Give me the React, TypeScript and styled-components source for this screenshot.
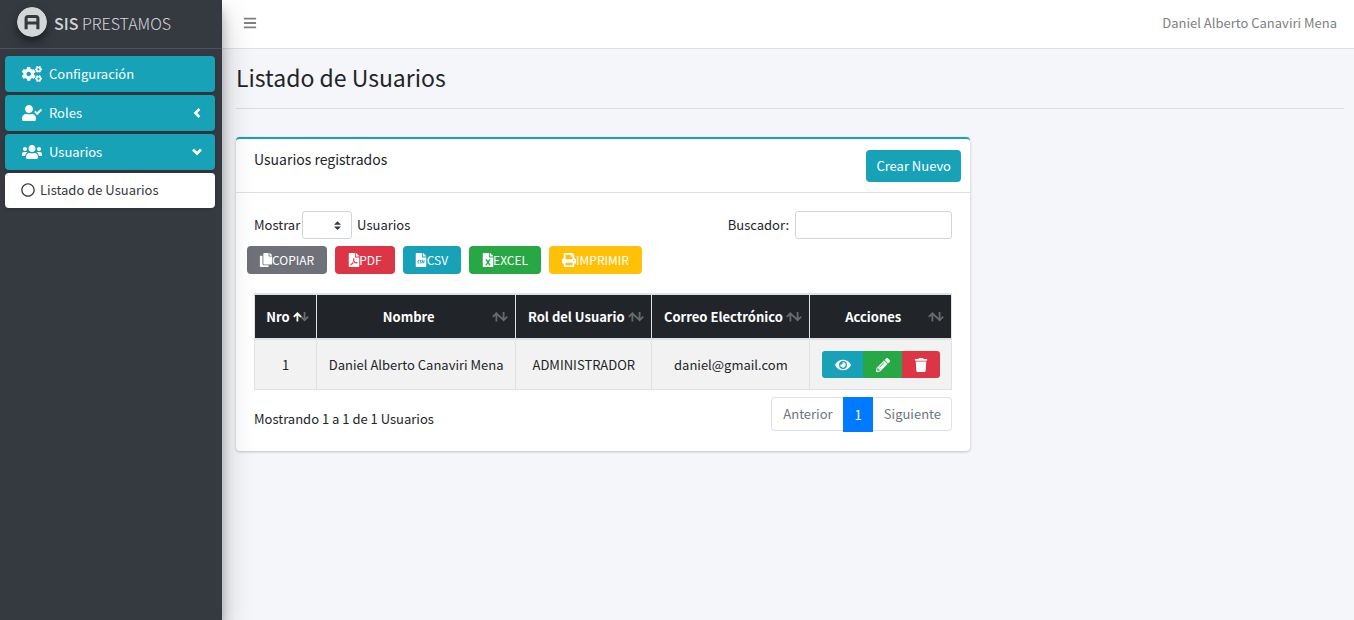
import React from "react";
import styled, { createGlobalStyle, css } from "styled-components";
import {
  FaAngleDown,
  FaAngleLeft,
  FaBars,
  FaCogs,
  FaCopy,
  FaEye,
  FaFileCsv,
  FaFileExcel,
  FaFilePdf,
  FaPencilAlt,
  FaPrint,
  FaRegCircle,
  FaTrash,
  FaUserCheck,
  FaUsers,
} from "react-icons/fa";

const teal = "#17a2b8";
const green = "#28a745";
const red = "#dc3545";
const yellow = "#ffc107";
const gray = "#6c757d";
const line = "#dee2e6";

const GlobalStyle = createGlobalStyle`
  *, *::before, *::after { box-sizing: border-box; }
  body {
    margin: 0;
    background: #f4f6f9;
    color: #212529;
    font-family: "Source Sans Pro", "Noto Sans CJK SC", "Noto Sans", sans-serif;
    font-size: 13px;
    line-height: 20px;
  }
  button, input, select { font: inherit; }
  svg { flex: none; }
`;

const Shell = styled.div`
  display: flex;
  min-height: 100vh;
`;

const Sidebar = styled.aside`
  position: relative;
  z-index: 2;
  flex: 0 0 222px;
  background: #343a40;
  box-shadow: 0 14px 28px rgba(0, 0, 0, 0.25), 0 10px 10px rgba(0, 0, 0, 0.22);
`;

const Brand = styled.a`
  display: flex;
  align-items: center;
  gap: 7px;
  height: 49px;
  padding: 0 17px 4px;
  border-bottom: 1px solid #4b545c;
  color: rgba(255, 255, 255, 0.8);
  font-size: 16px;
  font-weight: 300;
  line-height: 22px;
  text-decoration: none;
  white-space: nowrap;

  span {
    padding-top: 2px;
  }

  strong {
    font-weight: 500;
  }
`;

const LogoMark = styled.svg`
  width: 30px;
  height: 30px;
  border-radius: 50%;
  box-shadow: 0 6px 12px rgba(0, 0, 0, 0.25), 0 4px 5px rgba(0, 0, 0, 0.25);
`;

const Menu = styled.ul`
  display: flex;
  flex-direction: column;
  gap: 3px;
  margin: 0;
  padding: 7px 7px 0 5px;
  list-style: none;
`;

const MenuLink = styled.a<{ $sub?: boolean }>`
  display: flex;
  align-items: center;
  gap: ${(p) => (p.$sub ? 5 : 7)}px;
  height: ${(p) => (p.$sub ? 35 : 36)}px;
  padding: 0 11px ${(p) => (p.$sub ? 2 : 0)}px ${(p) => (p.$sub ? 16 : 17)}px;
  border-radius: 4px;
  background: ${(p) => (p.$sub ? "#fff" : teal)};
  color: ${(p) => (p.$sub ? "#343a40" : "#fff")};
  box-shadow: 0 1px 3px rgba(0, 0, 0, 0.16);
  text-decoration: none;

  span {
    flex: 1;
  }
`;

const Page = styled.div`
  flex: 1;
  min-width: 0;
`;

const Navbar = styled.header`
  display: flex;
  align-items: center;
  justify-content: space-between;
  height: 49px;
  padding: 0 17px 3px 21px;
  border-bottom: 1px solid ${line};
  background: #fff;
  color: #808080;
`;

const IconButton = styled.button`
  display: flex;
  padding: 0;
  border: 0;
  background: none;
  color: inherit;
  cursor: pointer;
`;

const NavLink = styled.a`
  color: inherit;
  text-decoration: none;
`;

const Content = styled.main`
  padding: 12px 10px 24px 14px;
`;

const Title = styled.h1`
  margin: 0;
  font-size: 23px;
  font-weight: 400;
  line-height: 32px;
`;

const Divider = styled.hr`
  margin: 15px 0 28px;
  border: 0;
  border-top: 1px solid #dadce0;
`;

const Grid = styled.div`
  display: grid;
  grid-template-columns: repeat(12, minmax(0, 1fr));
  column-gap: 14px;
`;

const Card = styled.section`
  grid-column: span 8;
  border-top: 2px solid ${teal};
  border-radius: 4px;
  background: #fff;
  box-shadow: 0 0 1px rgba(0, 0, 0, 0.13), 0 1px 3px rgba(0, 0, 0, 0.2);
`;

const CardHeader = styled.div`
  display: flex;
  justify-content: space-between;
  align-items: flex-start;
  padding: 11px 9px 10px 18px;
  border-bottom: 1px solid #dfdfdf;
`;

const CardTitle = styled.h2`
  margin: 0;
  font-size: 14px;
  font-weight: 400;
  line-height: 18px;
`;

const Button = styled.button<{ $color: string }>`
  display: inline-flex;
  align-items: center;
  height: 32px;
  padding: 0 10px;
  border: 0;
  border-radius: 4px;
  background: ${(p) => p.$color};
  color: #fff;
  white-space: nowrap;
  cursor: pointer;
`;

/* Each glyph keeps its own advance width at a common 14px height. */
const Glyph = styled.span<{ $width: number }>`
  display: flex;
  justify-content: center;
  width: ${(p) => p.$width}px;

  svg {
    width: 16px;
    height: 14px;
  }
`;

const ExportButton = styled(Button)`
  height: 28px;
  padding: 0 13px;
  font-size: 12px;
`;

const CardBody = styled.div`
  padding: 18px;
`;

const Bar = styled.div`
  display: flex;
  justify-content: space-between;
`;

const Field = styled.label<{ $gap: number }>`
  display: flex;
  align-items: center;
  gap: ${(p) => p.$gap}px;
`;

const control = css`
  height: 28px;
  border: 1px solid #ced4da;
  border-radius: 3px;
  background-color: #fff;
`;

const SelectWrap = styled.span`
  display: grid;
  align-items: center;
  justify-items: end;

  > * {
    grid-area: 1 / 1;
  }

  svg {
    z-index: 1;
    margin-right: 11px;
    pointer-events: none;
  }
`;

const Select = styled.select`
  ${control}
  width: 50px;
  appearance: none;
`;

const SearchInput = styled.input`
  ${control}
  width: 157px;
  padding: 0 7px;
`;

const Exports = styled.div`
  display: flex;
  gap: 8px;
  margin: 7px -7px 19px;
`;

const Table = styled.table`
  width: 100%;
  table-layout: fixed;
  border: 1px solid ${line};
  border-width: 1px 0 0 1px;
  border-collapse: separate;
  border-spacing: 0;
  text-align: center;
  white-space: nowrap;
`;

const HeadCell = styled.th`
  height: 46px;
  padding: 0 7px 0 11px;
  border: solid ${line};
  border-width: 1px 1px 2px 0;
  background: #212529;
  color: #fff;
  font-weight: 700;
`;

const HeadContent = styled.div`
  display: flex;
  align-items: center;
  justify-content: space-between;
  gap: 3px;

  span {
    flex: 1;
  }
`;

const Cell = styled.td`
  height: 50px;
  padding: 0;
  border: solid ${line};
  border-width: 0 1px 1px 0;
  background: #f2f2f2;
`;

const Actions = styled.div`
  display: inline-flex;
  overflow: hidden;
  border-radius: 3px;
  vertical-align: middle;
`;

const ActionButton = styled.button<{ $color: string }>`
  display: flex;
  align-items: center;
  height: 27px;
  padding: 0 13px;
  border: 0;
  background: ${(p) => p.$color};
  color: #fff;
  cursor: pointer;

  &:not(:last-child) {
    padding-right: 12px;
  }
`;

const Footer = styled.div`
  display: flex;
  justify-content: space-between;
  padding-top: 7px;
`;

const Info = styled.div`
  padding-top: 12px;
`;

const Pager = styled.nav`
  display: flex;
  align-items: flex-start;
  height: 36px;
`;

const PageButton = styled.button<{ $edge?: "left" | "right" }>`
  height: ${(p) => (p.$edge ? 34 : 35)}px;
  padding: 0 10px 0 11px;
  border: 1px solid ${(p) => (p.$edge ? line : "#007bff")};
  ${(p) => p.$edge === "left" && "border-right: 0; border-radius: 4px 0 0 4px;"}
  ${(p) => p.$edge === "right" && "border-left: 0; border-radius: 0 4px 4px 0;"}
  background: ${(p) => (p.$edge ? "#fff" : "#007bff")};
  color: ${(p) => (p.$edge ? gray : "#fff")};
  cursor: pointer;
`;

function Logo() {
  return (
    <LogoMark viewBox="0 0 30 30" aria-hidden="true">
      <circle cx="15" cy="15" r="15" fill="#d4d5d6" />
      <path
        d="M9.1 22.3V11.6q0-2.1 2.1-2.1h7.6q2.1 0 2.1 2.1v10.7M9.1 16h11.8"
        fill="none"
        stroke="#343a40"
        strokeWidth="3.1"
      />
    </LogoMark>
  );
}

function SortArrows({ ascending }: { ascending?: boolean }) {
  return (
    <svg width="16" height="10" viewBox="0 0 16 10" fill="none" stroke="#fff" strokeWidth="1.8" aria-hidden="true">
      <path d="M11.6 0v8M8 4.6l3.6 3.6 3.6-3.6" opacity="0.32" />
      <path d="M4.4 9.4V1.6M.8 4.9l3.6-3.6L8 4.9" opacity={ascending ? 1 : 0.32} />
    </svg>
  );
}

const columns = [
  { name: "Nro", width: "8.9%" },
  { name: "Nombre", width: "28.6%" },
  { name: "Rol del Usuario", width: "19.5%" },
  { name: "Correo Electrónico", width: "22.7%" },
  { name: "Acciones", width: "20.3%" },
];

const exportsList = [
  { label: "COPIAR", color: "#6e7278", Icon: FaCopy, width: 12 },
  { label: "PDF", color: red, Icon: FaFilePdf, width: 11 },
  { label: "CSV", color: teal, Icon: FaFileCsv, width: 11 },
  { label: "EXCEL", color: green, Icon: FaFileExcel, width: 11 },
  { label: "IMPRIMIR", color: yellow, Icon: FaPrint, width: 14 },
];

const actions = [
  { label: "Ver", color: teal, Icon: FaEye, width: 16 },
  { label: "Editar", color: green, Icon: FaPencilAlt, width: 14 },
  { label: "Eliminar", color: red, Icon: FaTrash, width: 12 },
];

export default function App() {
  return (
    <>
      <GlobalStyle />
      <Shell>
        <Sidebar>
          <Brand href="#">
            <Logo />
            <span>
              <strong>SIS</strong> PRESTAMOS
            </span>
          </Brand>
          <nav>
            <Menu>
              <li>
                <MenuLink href="#configuracion">
                  <FaCogs size={20} />
                  <span>Configuración</span>
                </MenuLink>
              </li>
              <li>
                <MenuLink href="#roles">
                  <FaUserCheck size={20} />
                  <span>Roles</span>
                  <FaAngleLeft size={14} strokeWidth={24} stroke="#fff" />
                </MenuLink>
              </li>
              <li>
                <MenuLink href="#usuarios">
                  <FaUsers size={20} />
                  <span>Usuarios</span>
                  <FaAngleDown size={14} strokeWidth={24} stroke="#fff" />
                </MenuLink>
              </li>
              <li>
                <MenuLink href="#listado" $sub>
                  <FaRegCircle size={14} />
                  <span>Listado de Usuarios</span>
                </MenuLink>
              </li>
            </Menu>
          </nav>
        </Sidebar>
        <Page>
          <Navbar>
            <IconButton aria-label="Menú">
              <FaBars size={14} />
            </IconButton>
            <NavLink href="#perfil">Daniel Alberto Canaviri Mena</NavLink>
          </Navbar>
          <Content>
            <Title>Listado de Usuarios</Title>
            <Divider />
            <Grid>
              <Card>
                <CardHeader>
                  <CardTitle>Usuarios registrados</CardTitle>
                  <Button $color={teal}>Crear Nuevo</Button>
                </CardHeader>
                <CardBody>
                  <Bar>
                    <Field $gap={2}>
                      Mostrar
                      <SelectWrap>
                        <Select defaultValue="">
                          <option value="" />
                        </Select>
                        <svg width="7" height="9" viewBox="0 0 4 5" fill="#343a40" aria-hidden="true">
                          <path d="M2 0L0 2h4zm0 5L0 3h4z" />
                        </svg>
                      </SelectWrap>
                      <span>&nbsp;Usuarios</span>
                    </Field>
                    <Field $gap={6}>
                      Buscador:
                      <SearchInput type="search" />
                    </Field>
                  </Bar>
                  <Exports>
                    {exportsList.map(({ label, color, Icon, width }) => (
                      <ExportButton key={label} $color={color}>
                        <Glyph $width={width}>
                          <Icon />
                        </Glyph>
                        {label}
                      </ExportButton>
                    ))}
                  </Exports>
                  <Table>
                    <colgroup>
                      {columns.map((c) => (
                        <col key={c.name} width={c.width} />
                      ))}
                    </colgroup>
                    <thead>
                      <tr>
                        {columns.map((c, i) => (
                          <HeadCell key={c.name} scope="col">
                            <HeadContent>
                              <span>{c.name}</span>
                              <SortArrows ascending={i === 0} />
                            </HeadContent>
                          </HeadCell>
                        ))}
                      </tr>
                    </thead>
                    <tbody>
                      <tr>
                        <Cell>1</Cell>
                        <Cell>Daniel Alberto Canaviri Mena</Cell>
                        <Cell>ADMINISTRADOR</Cell>
                        <Cell>daniel@gmail.com</Cell>
                        <Cell>
                          <Actions>
                            {actions.map(({ label, color, Icon, width }) => (
                              <ActionButton key={label} $color={color} aria-label={label}>
                                <Glyph $width={width}>
                                  <Icon />
                                </Glyph>
                              </ActionButton>
                            ))}
                          </Actions>
                        </Cell>
                      </tr>
                    </tbody>
                  </Table>
                  <Footer>
                    <Info>Mostrando 1 a 1 de 1 Usuarios</Info>
                    <Pager aria-label="Paginación">
                      <PageButton $edge="left">Anterior</PageButton>
                      <PageButton>1</PageButton>
                      <PageButton $edge="right">Siguiente</PageButton>
                    </Pager>
                  </Footer>
                </CardBody>
              </Card>
            </Grid>
          </Content>
        </Page>
      </Shell>
    </>
  );
}
